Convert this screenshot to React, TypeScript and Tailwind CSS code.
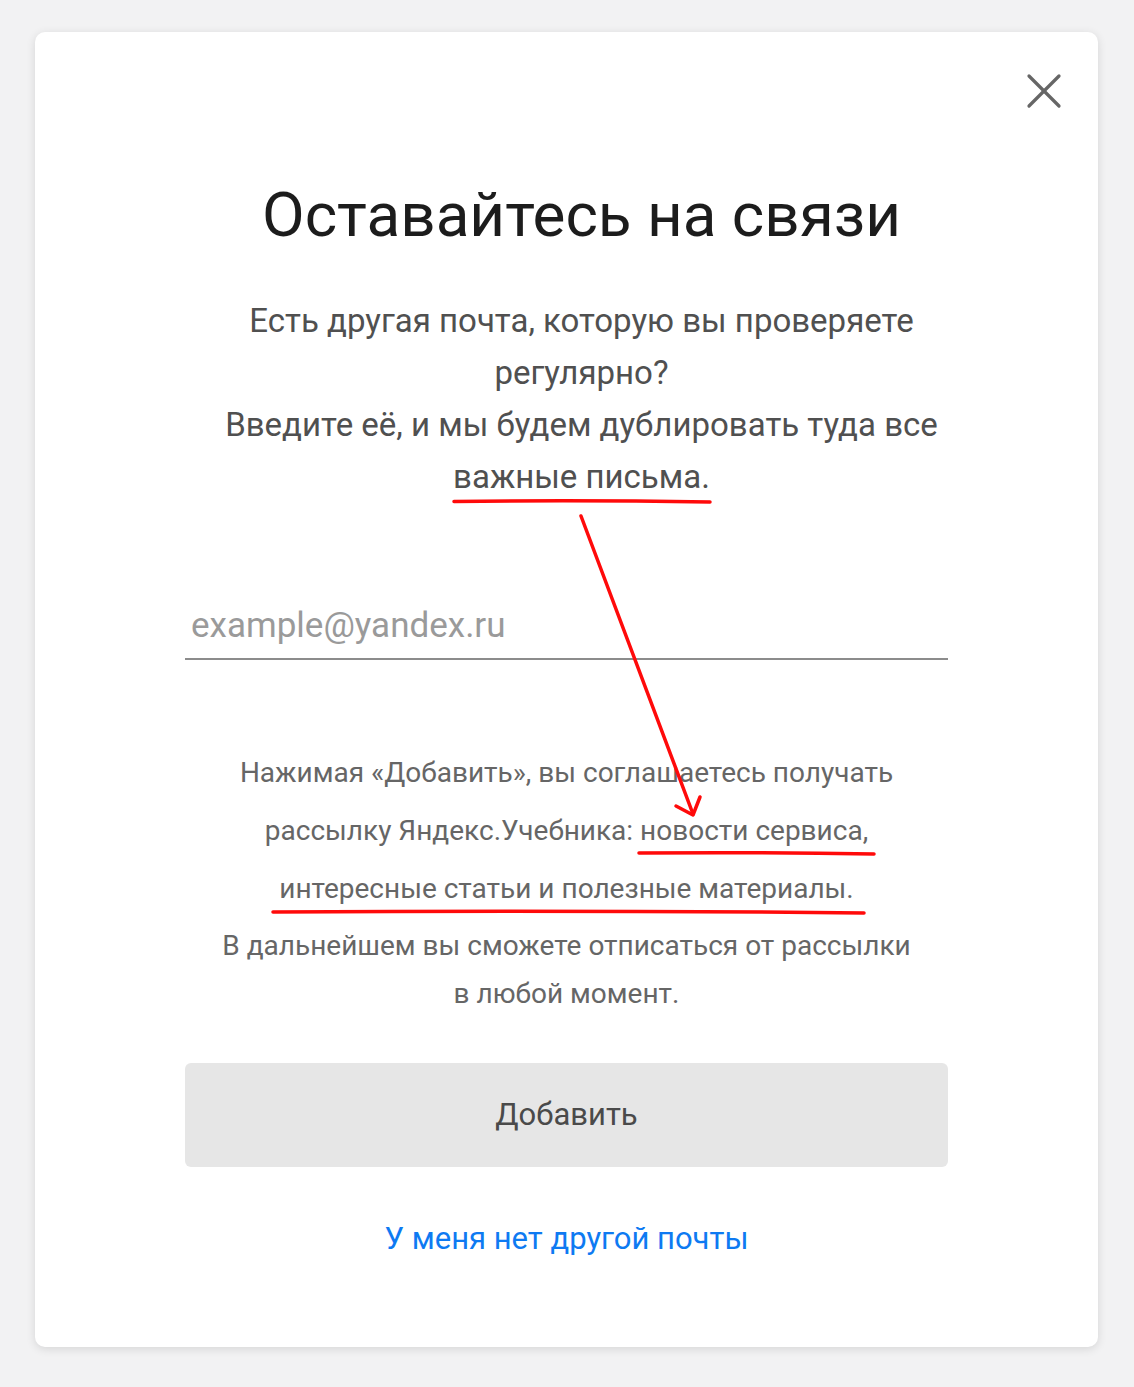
import { X } from "lucide-react";

const font = { fontFamily: "Roboto, 'Noto Sans', sans-serif" };

function Annotations() {
  return (
    <svg
      className="pointer-events-none absolute left-0 top-0"
      width="1134"
      height="1387"
      viewBox="0 0 1134 1387"
      fill="none"
    >
      <g stroke="#ff0a0a" strokeWidth="3.5" strokeLinecap="round" strokeLinejoin="round">
        <path d="M454 501.5 Q580 500 710 502" />
        <path d="M639 853 Q760 852 874 854" />
        <path d="M273 912 Q570 910 864 913" />
        <path d="M581 516 L693 814" />
        <path d="M676 806 L693 815 L700 797" />
      </g>
    </svg>
  );
}

export default function App() {
  return (
    <div className="relative min-h-[1387px] bg-[#f2f2f3] px-[35px] pt-[32px]" style={font}>
      <div className="relative flex h-[1315px] w-[1063px] flex-col rounded-[10px] bg-white px-[150px] pt-[147px] shadow-[0_2px_10px_rgba(0,0,0,0.12)]">
        <button className="absolute right-[24px] top-[29px] text-[#666]">
          <X size={60} strokeWidth={1.3} />
        </button>

        <h1 className="pl-[30px] text-center text-[62px] font-normal leading-[72px] text-[#1c1c1c]">
          Оставайтесь на связи
        </h1>

        <p className="mt-[44px] pl-[30px] text-center text-[33px] leading-[52px] text-[#505050]">
          Есть другая почта, которую вы проверяете
          <br />
          регулярно?
          <br />
          Введите её, и мы будем дублировать туда все
          <br />
          важные письма.
        </p>

        <input
          type="email"
          placeholder="example@yandex.ru"
          className="mt-[95px] h-[62px] w-full border-b-2 border-[#8c8c8c] bg-transparent px-[6px] pb-[6px] text-[35px] text-[#333] outline-none placeholder:text-[#9a9a9a]"
        />

        <p className="mt-[84px] text-center text-[28px] leading-[58px] text-[#666]">
          Нажимая «Добавить», вы соглашаетесь получать
          <br />
          рассылку Яндекс.Учебника: новости сервиса,
          <br />
          интересные статьи и полезные материалы.
        </p>
        <p className="mt-[4px] text-center text-[28px] leading-[48px] text-[#666]">
          В дальнейшем вы сможете отписаться от рассылки
          <br />
          в любой момент.
        </p>

        <button className="mt-[45px] h-[104px] w-full shrink-0 rounded-[6px] bg-[#e6e6e6] text-[31px] text-[#4a4a4a]">
          Добавить
        </button>

        <a href="#" className="mt-[52px] block text-center text-[31px] leading-[40px] text-[#0e7af2]">
          У меня нет другой почты
        </a>
      </div>
      <Annotations />
    </div>
  );
}
